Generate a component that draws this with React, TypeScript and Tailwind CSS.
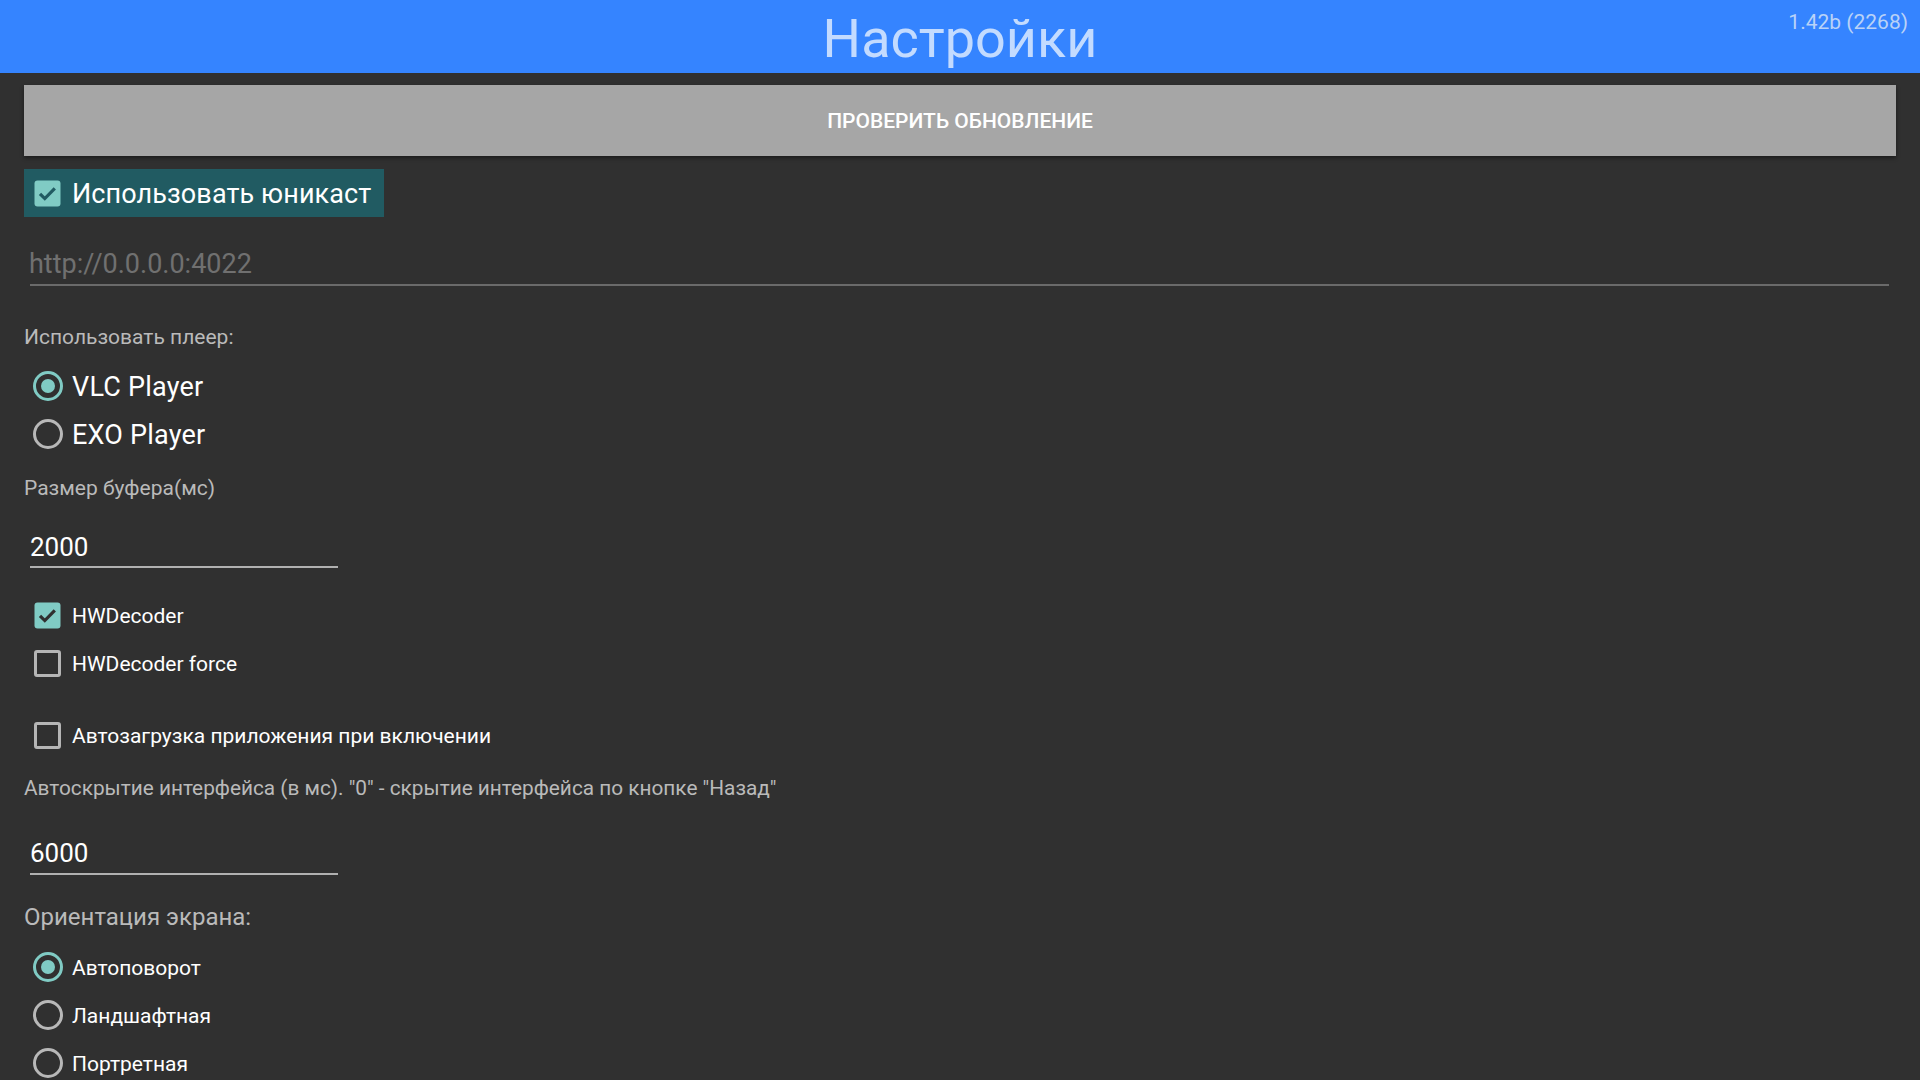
import React, { useState } from 'react';

const font = { fontFamily: 'Roboto, "Noto Sans", sans-serif' };

function CheckBox({ checked, bg }: { checked: boolean; bg: string }) {
  if (!checked) {
    return <div className="w-[27px] h-[27px] rounded-[3px] border-[3px] border-[#b5b5b5] shrink-0" />;
  }
  return (
    <svg width="27" height="27" viewBox="0 0 27 27" className="shrink-0">
      <rect x="0.5" y="0.5" width="26" height="26" rx="3" fill="#80cbc4" />
      <path d="M6 13.8l4.8 4.8 10-10.2" fill="none" stroke={bg} strokeWidth="3.2" />
    </svg>
  );
}

function Radio({ checked }: { checked: boolean }) {
  return (
    <div
      className={`w-[30px] h-[30px] rounded-full border-[3px] flex items-center justify-center shrink-0 ${checked ? 'border-[#80cbc4]' : 'border-[#b8b8b8]'}`}
    >
      {checked && <div className="w-[14px] h-[14px] rounded-full bg-[#80cbc4]" />}
    </div>
  );
}

function CheckRow({ label, checked, className }: { label: string; checked: boolean; className?: string }) {
  return (
    <div className={`h-[48px] flex items-center pl-[10px] gap-[11px] ${className ?? ''}`}>
      <CheckBox checked={checked} bg="#303030" />
      <span className="text-[21px] leading-[26px] pt-[1px] text-white">{label}</span>
    </div>
  );
}

function RadioRow({ label, checked, big }: { label: string; checked: boolean; big?: boolean }) {
  return (
    <div className="h-[48px] flex items-center pl-[9px] gap-[9px]">
      <Radio checked={checked} />
      <span
        className={
          big
            ? 'text-[27px] tracking-[0.2px] leading-[30px] pt-[2px] text-white'
            : 'text-[21px] leading-[26px] pt-[1px] text-white'
        }
      >
        {label}
      </span>
    </div>
  );
}

function Label({ text, className }: { text: string; className?: string }) {
  return <div className={`leading-[24px] text-[#bababa] ${className ?? 'text-[21px]'}`}>{text}</div>;
}

function App() {
  const [unicast] = useState(true);
  const [player] = useState('vlc');
  const [orientation] = useState('auto');

  return (
    <div className="h-screen overflow-hidden bg-[#303030]" style={font}>
      <div className="relative h-[73px] bg-[#3584ff] flex items-center justify-center pt-[4px]">
        <h1 className="text-[54px] leading-[64px] text-[#c3dbff]">Настройки</h1>
        <span className="absolute top-[8px] right-[12px] text-[21px] leading-[28px] text-[#b9d2f7]">1.42b (2268)</span>
      </div>

      <div className="px-6">
        <button className="mt-[12px] h-[71px] w-full pt-[3px] bg-[#a6a6a6] text-white text-[21px] font-medium shadow-[0_2px_4px_rgba(0,0,0,0.45)]">
          ПРОВЕРИТЬ ОБНОВЛЕНИЕ
        </button>

        <div className="mt-[13px] h-[48px] w-[360px] bg-[#215b62] flex items-center pl-[10px] gap-[11px]">
          <CheckBox checked={unicast} bg="#215b62" />
          <span className="text-[27px] leading-[30px] pt-[2px] tracking-[0.1px] text-white">Использовать юникаст</span>
        </div>

        <div className="mt-[32px] ml-[6px] mr-[7px] pb-[5px] border-b-2 border-[#6a6a6a]">
          <div className="text-[27px] leading-[30px] text-[#707070] -ml-[1px]">http://0.0.0.0:4022</div>
        </div>

        <Label text="Использовать плеер:" className="mt-[39px] text-[21px]" />
        <div className="mt-[13px]">
          <RadioRow label="VLC Player" checked={player === 'vlc'} big />
          <RadioRow label="EXO Player" checked={player === 'exo'} big />
        </div>

        <Label text="Размер буфера(мс)" className="mt-[18px] text-[21px]" />
        <div className="mt-[32px] ml-[6px] w-[308px] pb-[4px] border-b-2 border-[#b0b0b0]">
          <div className="text-[26px] leading-[30px] text-white">2000</div>
        </div>

        <div className="mt-[23px]">
          <CheckRow label="HWDecoder" checked />
          <CheckRow label="HWDecoder force" checked={false} />
        </div>
        <CheckRow label="Автозагрузка приложения при включении" checked={false} className="mt-[24px]" />

        <Label
          text={'Автоскрытие интерфейса (в мс). "0" - скрытие интерфейса по кнопке "Назад"'}
          className="mt-[17px] text-[20.8px]"
        />
        <div className="mt-[38px] ml-[6px] w-[308px] pb-[5px] border-b-2 border-[#b0b0b0]">
          <div className="text-[26px] leading-[30px] text-white">6000</div>
        </div>

        <div className="mt-[28px] text-[24px] leading-[28px] text-[#bababa]">Ориентация экрана:</div>
        <div className="mt-[12px]">
          <RadioRow label="Автоповорот" checked={orientation === 'auto'} />
          <RadioRow label="Ландшафтная" checked={orientation === 'land'} />
          <RadioRow label="Портретная" checked={orientation === 'port'} />
        </div>
      </div>
    </div>
  );
}

export default App;
